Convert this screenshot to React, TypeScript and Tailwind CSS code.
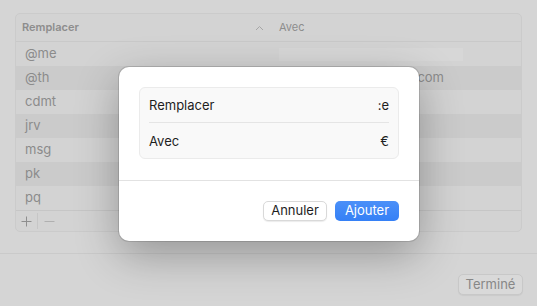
import React from "react";

const rows = [
  { a: "@me", b: "" },
  { a: "@th", b: "thomas.dupont@mail.com" },
  { a: "cdmt", b: "" },
  { a: "jrv", b: "" },
  { a: "msg", b: "" },
  { a: "pk", b: "" },
  { a: "pq", b: "" },
];

export default function App() {
  return (
    <div
      className="relative w-[537px] h-[306px] overflow-hidden bg-[#d5d5d5] text-[13px]"
      style={{ fontFamily: "Inter, 'Noto Sans', sans-serif" }}
    >
      <div className="flex flex-col h-full">
        <div className="pt-[13px] px-[15px]">
          <div className="h-[219px] rounded-[5px] border border-[#cbcbcb] bg-[#d3d3d3] flex flex-col overflow-hidden">
            <div className="h-[28px] flex items-center border-b border-[#c9c9c9] shrink-0">
              <div className="w-[256px] pl-[6px] flex items-center justify-between pr-[8px]">
                <span className="text-[11px] font-semibold text-[#8d8d8d]">Remplacer</span>
                <svg width="9" height="6" viewBox="0 0 9 6">
                  <path d="M1 5 L4.5 1.5 L8 5" fill="none" stroke="#a6a6a6" strokeWidth="1" />
                </svg>
              </div>
              <div className="pl-[7px] text-[11px] text-[#8d8d8d]">Avec</div>
            </div>
            {rows.map((r, i) => (
              <div
                key={r.a}
                className={`h-[24px] flex items-center shrink-0 ${i % 2 === 1 ? "bg-[#cbcbcb]" : ""}`}
              >
                <div className="w-[256px] pl-[9px] text-[13px] text-[#8b8b8b]">{r.a}</div>
                {i === 0 ? (
                  <div className="ml-[7px] w-[184px] h-[13px] bg-[#d7d7d7]" />
                ) : (
                  <div className="ml-[7px] w-[165px] text-[13px] text-[#8b8b8b] whitespace-nowrap flex justify-end">
                    {r.b}
                  </div>
                )}
              </div>
            ))}
            <div className="flex-1 border-t border-[#c6c6c6] flex items-center">
              <div className="w-[21px] flex justify-center text-[#8e8e8e]">
                <svg width="11" height="11" viewBox="0 0 11 11">
                  <path d="M5.5 0.5 V10.5 M0.5 5.5 H10.5" stroke="#8e8e8e" strokeWidth="1" />
                </svg>
              </div>
              <div className="w-px h-[16px] bg-[#c6c6c6]" />
              <div className="w-[22px] flex justify-center">
                <svg width="11" height="11" viewBox="0 0 11 11">
                  <path d="M0.5 5.5 H10.5" stroke="#b0b0b0" strokeWidth="1" />
                </svg>
              </div>
            </div>
          </div>
        </div>
        <div className="mt-[21px] h-px bg-[#cacaca]" />
        <div className="flex-1 flex items-start justify-end pr-[14px] pt-[20px]">
          <div className="h-[21px] w-[65px] rounded-[5px] border border-[#c8c8c8] bg-[#d9d9d9] shadow-[0_1px_1px_rgba(0,0,0,0.05)] flex items-center justify-center text-[13px] text-[#878787]">
            Terminé
          </div>
        </div>
      </div>

      <div className="absolute left-[119px] top-[67px] w-[300px] h-[174px] rounded-[10px] bg-white shadow-[0_0_0_1px_rgba(0,0,0,0.12),0_14px_44px_rgba(0,0,0,0.3)] flex flex-col">
        <div className="px-[20px] pt-[20px]">
          <div className="h-[72px] rounded-[6px] border border-[#ebebeb] bg-[#f9f9f9] flex flex-col px-[9px]">
            <div className="h-[36px] flex items-center justify-between border-b border-[#e5e5e5] pt-[1px]">
              <span className="text-[#1e1e1e]">Remplacer</span>
              <span className="text-[#1e1e1e]">:e</span>
            </div>
            <div className="h-[35px] flex items-center justify-between pt-[3px]">
              <span className="text-[#1e1e1e]">Avec</span>
              <span className="text-[#1e1e1e]">€</span>
            </div>
          </div>
        </div>
        <div className="mt-[21px] h-px bg-[#e2e2e2]" />
        <div className="flex justify-end gap-[8px] px-[20px] pt-[20px]">
          <div className="h-[20px] w-[64px] rounded-[5px] bg-white border border-[#d9d9d9] shadow-[0_1px_1px_rgba(0,0,0,0.08)] flex items-center justify-center text-[13px] text-[#1e1e1e]">
            Annuler
          </div>
          <div className="h-[20px] w-[64px] rounded-[5px] bg-[linear-gradient(#4b90f8,#3580f6)] flex items-center justify-center text-[13px] text-white">
            Ajouter
          </div>
        </div>
      </div>
    </div>
  );
}
